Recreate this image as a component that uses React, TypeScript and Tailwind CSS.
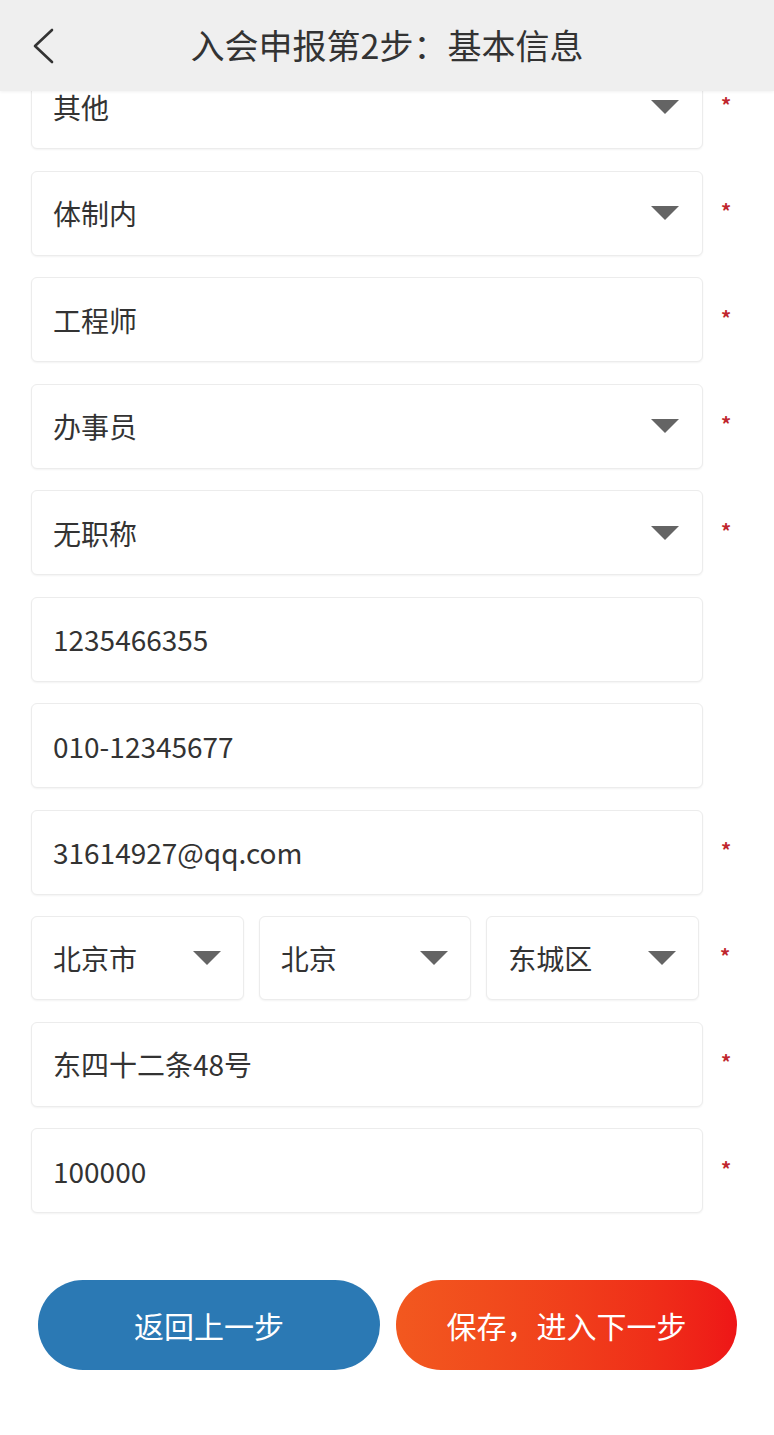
import React from "react";

const font = { fontFamily: '"Noto Sans CJK SC", "Noto Sans", sans-serif' };

function Caret() {
  return (
    <span className="block w-0 h-0 border-l-[14px] border-r-[14px] border-t-[14px] border-l-transparent border-r-transparent border-t-[#646464]" />
  );
}

function Star({ show, pad }: { show: boolean; pad: string }) {
  return (
    <div className={`flex justify-start -mt-[4px] ${pad}`}>
      {show && <span className="text-[#c0262d] text-[20px] font-bold leading-none">*</span>}
    </div>
  );
}

function Field({ value, select, required }: { value: string; select?: boolean; required?: boolean }) {
  return (
    <div className="flex items-center">
      <div className="w-[672px] h-[85px] bg-white border border-[#ececec] rounded-[6px] shadow-[0_1px_2px_rgba(0,0,0,0.05)] flex items-center justify-between pl-[21px] pr-[23px]">
        <span className="text-[28px] text-[#333] leading-none">{value}</span>
        {select && <Caret />}
      </div>
      <Star show={!!required} pad="pl-[18px]" />
    </div>
  );
}

function SmallSelect({ value }: { value: string }) {
  return (
    <div className="flex-1 h-[84px] bg-white border border-[#ececec] rounded-[6px] shadow-[0_1px_2px_rgba(0,0,0,0.05)] flex items-center justify-between pl-[21px] pr-[22px]">
      <span className="text-[28px] text-[#333] leading-none">{value}</span>
      <Caret />
    </div>
  );
}

export default function App() {
  return (
    <div className="relative w-[774px] min-h-[1435px] bg-white overflow-hidden" style={font}>
      <div className="absolute top-0 left-0 right-0 h-[91px] bg-[#efefef] z-10 flex items-center justify-center shadow-[0_1px_3px_rgba(0,0,0,0.06)]">
        <svg className="absolute left-[30px] top-[28px]" width="26" height="36" viewBox="0 0 26 36" fill="none">
          <path d="M22 2 L5 18 L22 34" stroke="#333" strokeWidth="2.6" strokeLinecap="round" strokeLinejoin="round" />
        </svg>
        <span className="text-[34px] text-[#333] leading-none -mt-[2px]">入会申报第2步：基本信息</span>
      </div>

      <div className="pt-[64px] pl-[31px] flex flex-col gap-[21.5px]">
        <Field value="其他" select required />
        <Field value="体制内" select required />
        <Field value="工程师" required />
        <Field value="办事员" select required />
        <Field value="无职称" select required />
        <Field value="1235466355" />
        <Field value="010-12345677" />
        <Field value="31614927@qq.com" required />
        <div className="flex items-center">
          <div className="w-[668px] flex gap-[15px]">
            <SmallSelect value="北京市" />
            <SmallSelect value="北京" />
            <SmallSelect value="东城区" />
          </div>
          <Star show pad="pl-[21px]" />
        </div>
        <Field value="东四十二条48号" required />
        <Field value="100000" required />
      </div>

      <div className="mt-[67px] pl-[38px] flex gap-[16px]">
        <button className="w-[342px] h-[90px] rounded-full bg-[#2b79b4] text-white text-[30px] leading-none flex items-center justify-center">
          返回上一步
        </button>
        <button className="w-[341px] h-[90px] rounded-full bg-gradient-to-r from-[#f2581f] to-[#ee1517] text-white text-[30px] leading-none flex items-center justify-center">
          保存，进入下一步
        </button>
      </div>
    </div>
  );
}
